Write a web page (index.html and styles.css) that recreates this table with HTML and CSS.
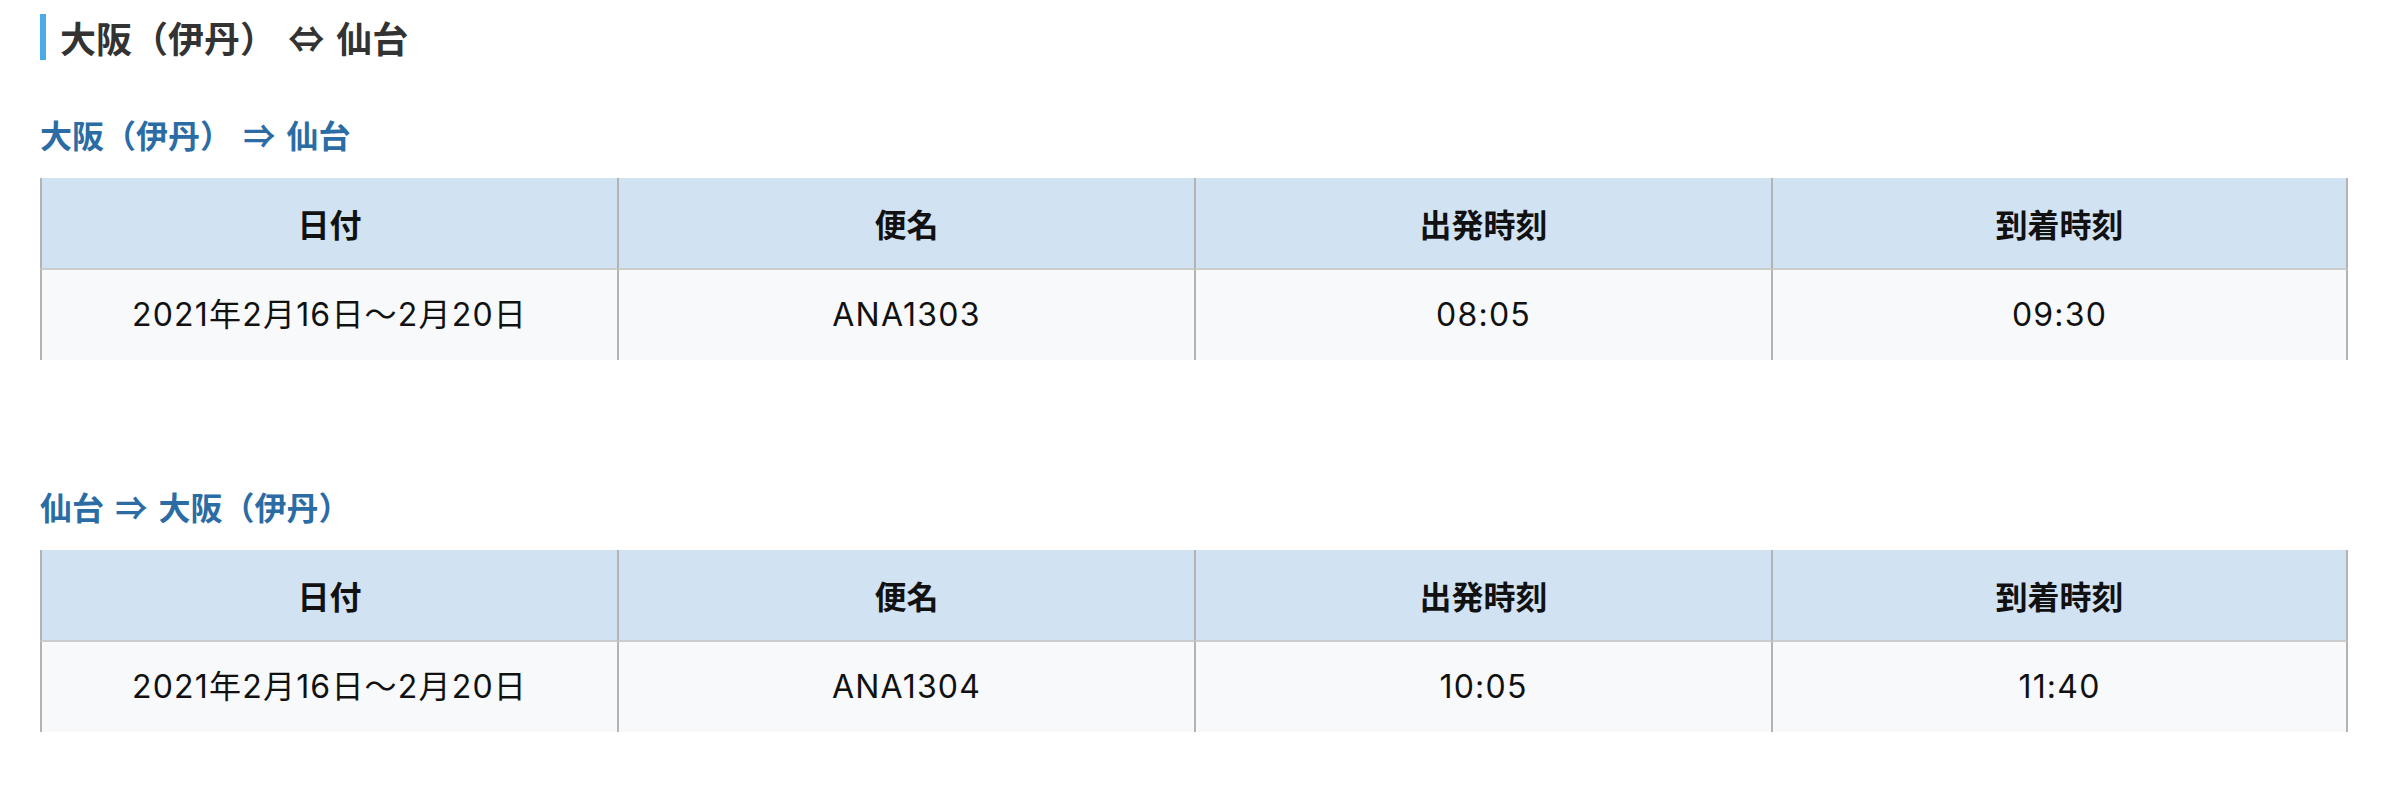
FILE: index.html
```html
<!DOCTYPE html>
<html lang="ja">
<head>
<meta charset="utf-8">
<title>大阪（伊丹） ⇔ 仙台</title>
<link rel="stylesheet" href="styles.css">
</head>
<body>
<main class="page">
  <h2 class="route-title">大阪（伊丹） ⇔ 仙台</h2>

  <section class="leg">
    <h3 class="leg-title">大阪（伊丹） ⇒ 仙台</h3>
    <table class="flights">
      <thead>
        <tr><th>日付</th><th>便名</th><th>出発時刻</th><th>到着時刻</th></tr>
      </thead>
      <tbody>
        <tr><td>2021年2月16日～2月20日</td><td>ANA1303</td><td>08:05</td><td>09:30</td></tr>
      </tbody>
    </table>
  </section>

  <section class="leg">
    <h3 class="leg-title">仙台 ⇒ 大阪（伊丹）</h3>
    <table class="flights">
      <thead>
        <tr><th>日付</th><th>便名</th><th>出発時刻</th><th>到着時刻</th></tr>
      </thead>
      <tbody>
        <tr><td>2021年2月16日～2月20日</td><td>ANA1304</td><td>10:05</td><td>11:40</td></tr>
      </tbody>
    </table>
  </section>
</main>
</body>
</html>
```

FILE: styles.css
```css
html, body {
  margin: 0;
  padding: 0;
  background: #ffffff;
}

body {
  font-family: "Noto Sans CJK JP", "Noto Sans", sans-serif;
  color: #111111;
}

.page {
  padding: 14px 40px 0 40px;
}

.route-title {
  margin: 0;
  border-left: 6px solid #4aabe6;
  padding-left: 14px;
  font-size: 36px;
  line-height: 46px;
  font-weight: 700;
  color: #333333;
  word-spacing: 4px;
}

.leg {
  margin-top: 52px;
}

.leg + .leg {
  margin-top: 124px;
}

.leg-title {
  margin: 0 0 22px 0;
  font-size: 32px;
  line-height: 44px;
  font-weight: 700;
  color: #2b6ca5;
  word-spacing: 4px;
}

.flights {
  width: 100%;
  border-collapse: separate;
  border-spacing: 0;
  table-layout: fixed;
}

.flights th,
.flights td {
  border-left: 2px solid #b3b3b3;
  text-align: center;
  font-size: 32px;
  line-height: 90px;
  padding: 0;
}

.flights th:last-child,
.flights td:last-child {
  border-right: 2px solid #b3b3b3;
}

.flights th {
  background: #d1e2f3;
  font-weight: 700;
  color: #111111;
  border-bottom: 2px solid #cccccc;
}

.flights td {
  background: #f7f9fb;
  font-family: "Inter", "Noto Sans CJK JP", sans-serif;
  font-weight: 400;
  letter-spacing: 1.2px;
  color: #111111;
}
```
